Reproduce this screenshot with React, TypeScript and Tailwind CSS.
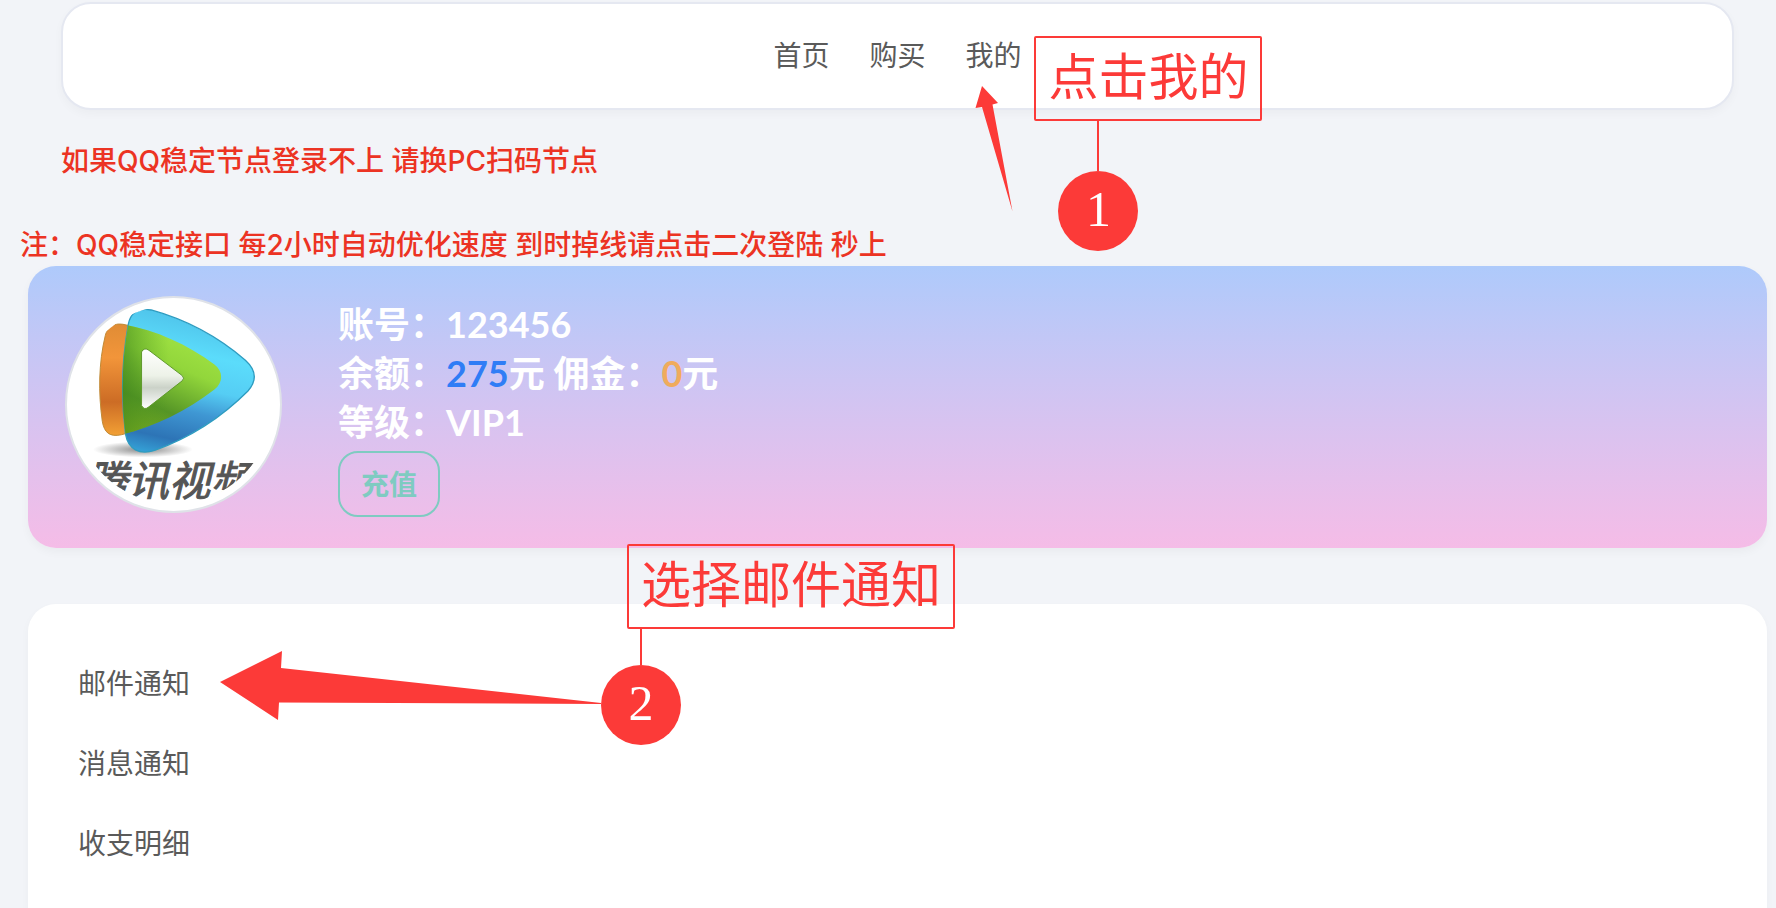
// Account page - user banner, notices and the settings list, with the two guide steps on top

import { memo } from "react";

interface CalloutProps {
  step: number;
  text: string;
  className: string;
  markerClassName: string;
  lineClassName: string;
}

const navItems = [
  { id: "home", label: "首页" },
  { id: "buy", label: "购买" },
  { id: "mine", label: "我的" },
];

const menuItems = [
  { id: "mail", label: "邮件通知" },
  { id: "message", label: "消息通知" },
  { id: "records", label: "收支明细" },
];

// Logo outlines, shared by the fills and the clip path
const orangePath =
  "M197 198 C203 172 220 160 250 164 C350 182 445 225 525 285 C552 306 552 338 525 360 C440 425 350 470 245 496 C210 503 194 490 188 455 C176 370 177 280 197 198Z";
const bluePath =
  "M266 165 C272 130 295 113 335 121 C440 150 540 205 618 272 C652 303 652 335 625 365 C550 440 450 505 345 543 C300 557 266 540 258 495 C244 385 247 270 266 165Z";

// Framed hint with a numbered marker hanging below it
const Callout = memo(
  ({ step, text, className, markerClassName, lineClassName }: CalloutProps) => (
    <div className={`absolute z-10 ${className}`}>
      <div className="border-2 border-[#fc3a38] rounded-xs px-3 pt-1 pb-[7px] text-[50px] leading-[70px] text-[#fc3a38] whitespace-nowrap">
        {text}
      </div>
      <div
        className={`absolute top-full w-20 flex flex-col items-center ${markerClassName}`}
      >
        <div className={`w-0.5 bg-[#fc3a38] ${lineClassName}`} />
        <div className="size-20 rounded-full bg-[#fc3a38] flex items-center justify-center pb-1 font-['Liberation_Serif',serif] text-[50px] leading-none text-white">
          {step}
        </div>
      </div>
    </div>
  )
);

const Avatar = () => (
  <svg
    viewBox="76 79 652 652"
    className="size-[217px] shrink-0"
    role="img"
    aria-label="腾讯视频"
  >
    <defs>
      <clipPath id="photo">
        <circle cx="402" cy="405" r="298" />
      </clipPath>
      <clipPath id="orangeShape">
        <path d={orangePath} />
      </clipPath>
      <linearGradient id="blue" x1="0.3" y1="0" x2="0.1" y2="1">
        <stop offset="0" stopColor="#4fc3ea" />
        <stop offset="0.25" stopColor="#5bdcfb" />
        <stop offset="0.48" stopColor="#55cdf4" />
        <stop offset="0.65" stopColor="#3f97d3" />
        <stop offset="0.86" stopColor="#2d74b6" />
        <stop offset="1" stopColor="#35a5d9" />
      </linearGradient>
      <linearGradient id="orange" x1="0" y1="0" x2="0" y2="1">
        <stop offset="0" stopColor="#e08c35" />
        <stop offset="0.3" stopColor="#f2953a" />
        <stop offset="0.7" stopColor="#cc6c25" />
        <stop offset="1" stopColor="#f2a035" />
      </linearGradient>
      <linearGradient id="green" x1="0.65" y1="0.1" x2="0.3" y2="0.95">
        <stop offset="0" stopColor="#a9ea48" />
        <stop offset="0.4" stopColor="#92d63b" />
        <stop offset="0.75" stopColor="#559526" />
        <stop offset="1" stopColor="#7fae20" />
      </linearGradient>
      <linearGradient id="greenEdge" x1="0" y1="0" x2="1" y2="0">
        <stop offset="0" stopColor="#3f861c" stopOpacity="0.6" />
        <stop offset="0.35" stopColor="#4f9a20" stopOpacity="0" />
      </linearGradient>
      <linearGradient id="play" x1="0" y1="0" x2="0" y2="1">
        <stop offset="0" stopColor="#ffffff" />
        <stop offset="0.45" stopColor="#edf2e8" />
        <stop offset="0.65" stopColor="#cbd2c8" />
        <stop offset="1" stopColor="#ffffff" />
      </linearGradient>
      <radialGradient id="shadow">
        <stop offset="0" stopColor="#555555" stopOpacity="0.7" />
        <stop offset="1" stopColor="#555555" stopOpacity="0" />
      </radialGradient>
    </defs>
    <circle cx="402" cy="405" r="323" fill="#ffffff" stroke="#dfe2e8" strokeWidth="6" />
    <g clipPath="url(#photo)">
      <ellipse cx="310" cy="540" rx="150" ry="24" fill="url(#shadow)" />
      <path d={orangePath} fill="url(#orange)" stroke="#c08a35" strokeWidth="3" />
      <path d={bluePath} fill="url(#blue)" stroke="#2e9cc0" strokeWidth="4" />
      <g clipPath="url(#orangeShape)">
        <path d={bluePath} fill="url(#green)" />
        <path d={bluePath} fill="url(#greenEdge)" />
      </g>
      <path
        d="M306 247 Q314 232 328 242 L428 318 Q437 326 428 334 L328 412 Q314 424 306 408Z"
        fill="url(#play)"
        stroke="#5f9a2c"
        strokeWidth="3"
      />
      <text
        x="138"
        y="680"
        fontSize="125"
        fontStyle="italic"
        fill="#555555"
        stroke="#555555"
        strokeWidth="3"
        fontFamily="'Noto Sans CJK SC', sans-serif"
      >
        腾讯视频
      </text>
    </g>
  </svg>
);

export default function App() {
  return (
    <div
      lang="zh-CN"
      className="min-h-screen flex flex-col overflow-hidden bg-[#f2f4f8] pt-0.5 font-['Inter','Noto_Sans_CJK_SC',sans-serif] text-[28px] leading-[42px] text-[#5a5a5a]"
    >
      {/* Top navigation */}
      <header className="ml-[61px] mr-[42px] h-[108px] flex items-center justify-center rounded-[30px] border-2 border-[#e5e8f1] bg-white shadow-[0_4px_10px_rgba(0,0,0,0.03)]">
        <nav className="relative flex gap-10">
          {navItems.map((item) => (
            <a key={item.id} href={`#${item.id}`}>
              {item.label}
            </a>
          ))}

          {/* Step 1 */}
          <svg
            viewBox="0 0 38 126"
            className="absolute left-[202px] top-[51px] z-10 w-[38px] h-[126px]"
            aria-hidden="true"
          >
            <path d="M7 0 L23 17 L17.500 18.500 L37.500 125.500 L7 21 L0.500 22Z" fill="#fc3a38" />
          </svg>
          <Callout
            step={1}
            text="点击我的"
            className="left-[261px] top-px"
            markerClassName="left-6"
            lineClassName="h-[50px]"
          />
        </nav>
      </header>

      {/* Notices */}
      <p className="mt-[30px] ml-[61px] font-medium text-[#ec3323]">
        如果QQ稳定节点登录不上 请换PC扫码节点
      </p>
      <p className="mt-[42px] ml-5 font-medium text-[#ec3323]">
        注：QQ稳定接口 每2小时自动优化速度 到时掉线请点击二次登陆 秒上
      </p>

      <main className="flex-1 flex flex-col gap-14 ml-7 mr-[9px]">
        {/* User banner */}
        <section className="flex items-start gap-14 rounded-[28px] bg-linear-to-b from-[#aecafb] to-[#f5bce7] pt-[30px] pb-[31px] pl-[37px] shadow-[0_4px_10px_rgba(0,0,0,0.04)]">
          <Avatar />
          <div className="pt-1 font-['Lato','Noto_Sans_CJK_SC',sans-serif] text-4xl leading-[49px] font-bold text-white">
            <p>账号：123456</p>
            <p>
              余额：<span className="text-[#2f7df6]">275</span>元 佣金：
              <span className="text-[#f0ab5c]">0</span>元
            </p>
            <p>等级：VIP1</p>
            <button
              type="button"
              className="mt-1 block rounded-[20px] border-2 border-[#7fcbc1] px-[21px] py-[10px] text-[28px] leading-[42px] text-[#7fcbc1]"
            >
              充值
            </button>
          </div>
        </section>

        {/* Settings list */}
        <section className="relative flex-1 rounded-t-[28px] bg-white pt-10 pb-6 pl-[50px] shadow-[0_4px_10px_rgba(0,0,0,0.03)]">
          <ul>
            {menuItems.map((item) => (
              <li key={item.id} className="flex h-20 items-center">
                <a href={`#${item.id}`}>{item.label}</a>
              </li>
            ))}
          </ul>

          {/* Step 2 */}
          <svg
            viewBox="0 0 382 70"
            className="absolute left-[192px] top-[47px] z-10 w-[382px] h-[70px]"
            aria-hidden="true"
          >
            <path d="M0 31 L62 0 L61 17 L381 52 L381 53 L59 51.500 L58 69Z" fill="#fc3a38" />
          </svg>
          <Callout
            step={2}
            text="选择邮件通知"
            className="left-[599px] -top-[60px]"
            markerClassName="-left-[26px]"
            lineClassName="h-9"
          />
        </section>
      </main>
    </div>
  );
}
